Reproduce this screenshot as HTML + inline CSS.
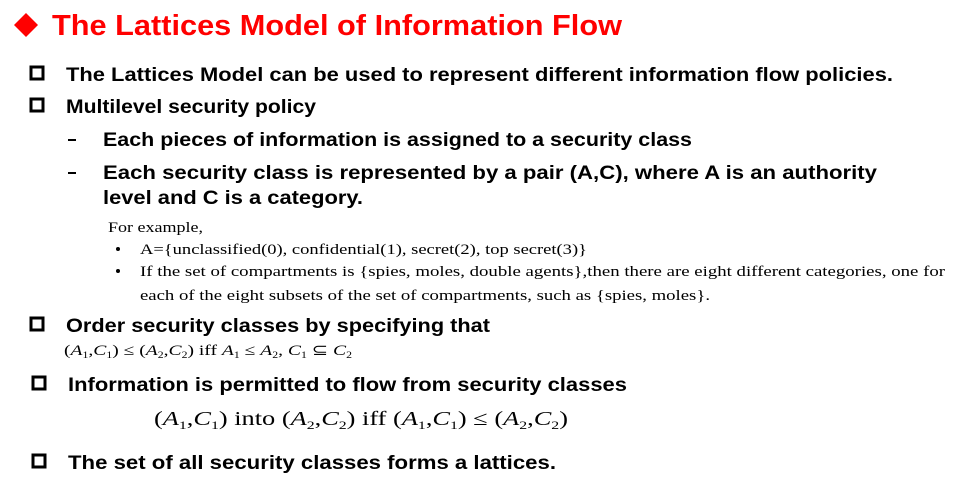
<!DOCTYPE html>
<html><head><meta charset="utf-8"><style>
html,body{margin:0;padding:0;background:#fff;}
svg{display:block;}
.b{font-family:"Liberation Sans",sans-serif;font-weight:bold;fill:#000;}
.s{font-family:"Liberation Serif",serif;fill:#000;}
.m{font-family:"Liberation Serif",serif;fill:#000;}
</style></head><body>
<svg width="961" height="489" viewBox="0 0 961 489" xmlns="http://www.w3.org/2000/svg" xml:space="preserve">
<polygon points="26,13 38,25 26,37 14,25" fill="#ff0000"/>
<text x="52" y="35" class="b" style="fill:#ff0000" font-size="29" textLength="570" lengthAdjust="spacingAndGlyphs">The Lattices Model of Information Flow</text>

<rect x="31" y="67" width="12" height="12" fill="none" stroke="#000" stroke-width="3"/>
<text x="66" y="81" class="b" font-size="19" textLength="827" lengthAdjust="spacingAndGlyphs">The Lattices Model can be used to represent different information flow policies.</text>

<rect x="31" y="99" width="12" height="12" fill="none" stroke="#000" stroke-width="3"/>
<text x="66" y="113" class="b" font-size="19" textLength="250" lengthAdjust="spacingAndGlyphs">Multilevel security policy</text>

<rect x="68" y="139" width="8" height="2" fill="#000"/>
<text x="103" y="146" class="b" font-size="19" textLength="589" lengthAdjust="spacingAndGlyphs">Each pieces of information is assigned to a security class</text>
<rect x="68" y="172" width="8" height="2" fill="#000"/>
<text x="103" y="179" class="b" font-size="19" textLength="774" lengthAdjust="spacingAndGlyphs">Each security class is represented by a pair (A,C), where A is an authority</text>
<text x="103" y="204" class="b" font-size="19" textLength="260" lengthAdjust="spacingAndGlyphs">level and C is a category.</text>

<text x="108" y="232" class="s" font-size="15" textLength="95" lengthAdjust="spacingAndGlyphs">For example,</text>
<circle cx="118" cy="249" r="2" fill="#000"/>
<text x="140" y="254" class="s" font-size="15" textLength="447" lengthAdjust="spacingAndGlyphs">A={unclassified(0), confidential(1), secret(2), top secret(3)}</text>
<circle cx="118" cy="271" r="2" fill="#000"/>
<text x="140" y="276" class="s" font-size="15" textLength="805" lengthAdjust="spacingAndGlyphs">If the set of compartments is {spies, moles, double agents},then there are eight different categories, one for</text>
<text x="140" y="300" class="s" font-size="15" textLength="570" lengthAdjust="spacingAndGlyphs">each of the eight subsets of the set of compartments, such as {spies, moles}.</text>

<rect x="31" y="318" width="12" height="12" fill="none" stroke="#000" stroke-width="3"/>
<text x="66" y="332" class="b" font-size="19" textLength="424" lengthAdjust="spacingAndGlyphs">Order security classes by specifying that</text>
<text x="64" y="355" class="m" font-size="15" textLength="288" lengthAdjust="spacingAndGlyphs">(<tspan font-style="italic">A</tspan><tspan font-size="9" dy="3">1</tspan><tspan dy="-3">,</tspan><tspan font-style="italic">C</tspan><tspan font-size="9" dy="3">1</tspan><tspan dy="-3">) ≤ (</tspan><tspan font-style="italic">A</tspan><tspan font-size="9" dy="3">2</tspan><tspan dy="-3">,</tspan><tspan font-style="italic">C</tspan><tspan font-size="9" dy="3">2</tspan><tspan dy="-3">)   iff   </tspan><tspan font-style="italic">A</tspan><tspan font-size="9" dy="3">1</tspan><tspan dy="-3"> ≤ </tspan><tspan font-style="italic">A</tspan><tspan font-size="9" dy="3">2</tspan><tspan dy="-3">, </tspan><tspan font-style="italic">C</tspan><tspan font-size="9" dy="3">1</tspan><tspan dy="-3"> ⊆ </tspan><tspan font-style="italic">C</tspan><tspan font-size="9" dy="3">2</tspan></text>

<rect x="33" y="377" width="12" height="12" fill="none" stroke="#000" stroke-width="3"/>
<text x="68" y="391" class="b" font-size="19" textLength="559" lengthAdjust="spacingAndGlyphs">Information is permitted to flow from security classes</text>
<text x="154" y="425" class="m" font-size="20" textLength="414" lengthAdjust="spacingAndGlyphs">(<tspan font-style="italic">A</tspan><tspan font-size="12" dy="4">1</tspan><tspan dy="-4">,</tspan><tspan font-style="italic">C</tspan><tspan font-size="12" dy="4">1</tspan><tspan dy="-4">)   into   (</tspan><tspan font-style="italic">A</tspan><tspan font-size="12" dy="4">2</tspan><tspan dy="-4">,</tspan><tspan font-style="italic">C</tspan><tspan font-size="12" dy="4">2</tspan><tspan dy="-4">)   iff   (</tspan><tspan font-style="italic">A</tspan><tspan font-size="12" dy="4">1</tspan><tspan dy="-4">,</tspan><tspan font-style="italic">C</tspan><tspan font-size="12" dy="4">1</tspan><tspan dy="-4">) ≤ (</tspan><tspan font-style="italic">A</tspan><tspan font-size="12" dy="4">2</tspan><tspan dy="-4">,</tspan><tspan font-style="italic">C</tspan><tspan font-size="12" dy="4">2</tspan><tspan dy="-4">)</tspan></text>

<rect x="33" y="455" width="12" height="12" fill="none" stroke="#000" stroke-width="3"/>
<text x="68" y="469" class="b" font-size="19" textLength="488" lengthAdjust="spacingAndGlyphs">The set of all security classes forms a lattices.</text>
</svg>
</body></html>
